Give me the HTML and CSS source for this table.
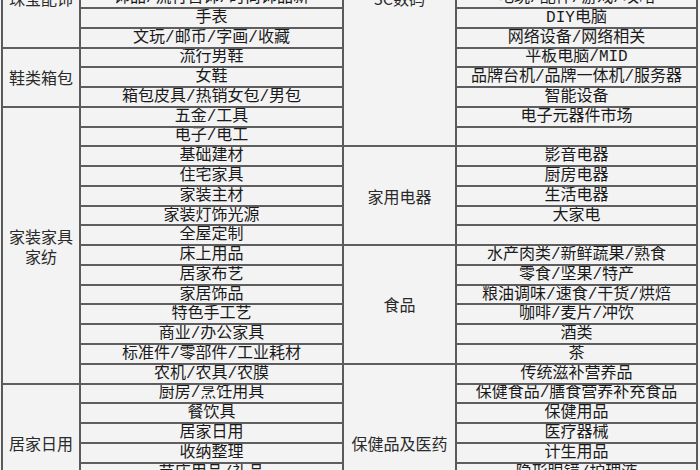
FILE: index.html
```html
<!DOCTYPE html>
<html lang="zh-CN">
<head>
<meta charset="utf-8">
<link rel="stylesheet" href="styles.css">
</head>
<body>
<div class="frame">
  <div class="grid">
    <div class="c cat top s3">珠宝配饰</div>
    <div class="c">饰品/流行首饰/时尚饰品新</div>
    <div class="c cat top s8">3C数码</div>
    <div class="c">电玩/配件/游戏/攻略</div>

    <div class="c">手表</div>
    <div class="c">DIY电脑</div>

    <div class="c">文玩/邮币/字画/收藏</div>
    <div class="c">网络设备/网络相关</div>

    <div class="c cat s3">鞋类箱包</div>
    <div class="c">流行男鞋</div>
    <div class="c">平板电脑/MID</div>

    <div class="c">女鞋</div>
    <div class="c">品牌台机/品牌一体机/服务器</div>

    <div class="c">箱包皮具/热销女包/男包</div>
    <div class="c">智能设备</div>

    <div class="c cat s14"><span class="two"><span class="ln">家装家具</span><span class="ln">家纺</span></span></div>
    <div class="c">五金/工具</div>
    <div class="c">电子元器件市场</div>

    <div class="c">电子/电工</div>
    <div class="c"></div>

    <div class="c">基础建材</div>
    <div class="c cat s5">家用电器</div>
    <div class="c">影音电器</div>

    <div class="c">住宅家具</div>
    <div class="c">厨房电器</div>

    <div class="c">家装主材</div>
    <div class="c">生活电器</div>

    <div class="c">家装灯饰光源</div>
    <div class="c">大家电</div>

    <div class="c">全屋定制</div>
    <div class="c"></div>

    <div class="c">床上用品</div>
    <div class="c cat s6">食品</div>
    <div class="c">水产肉类/新鲜蔬果/熟食</div>

    <div class="c">居家布艺</div>
    <div class="c">零食/坚果/特产</div>

    <div class="c">家居饰品</div>
    <div class="c">粮油调味/速食/干货/烘焙</div>

    <div class="c">特色手工艺</div>
    <div class="c">咖啡/麦片/冲饮</div>

    <div class="c">商业/办公家具</div>
    <div class="c">酒类</div>

    <div class="c">标准件/零部件/工业耗材</div>
    <div class="c">茶</div>

    <div class="c">农机/农具/农膜</div>
    <div class="c cat s8">保健品及医药</div>
    <div class="c">传统滋补营养品</div>

    <div class="c cat s6">居家日用</div>
    <div class="c">厨房/烹饪用具</div>
    <div class="c">保健食品/膳食营养补充食品</div>

    <div class="c">餐饮具</div>
    <div class="c">保健用品</div>

    <div class="c">居家日用</div>
    <div class="c">医疗器械</div>

    <div class="c">收纳整理</div>
    <div class="c">计生用品</div>

    <div class="c">节庆用品/礼品</div>
    <div class="c">隐形眼镜/护理液</div>

    <div class="c">鲜花速递/绿植园艺</div>
    <div class="c">OTC药品/医疗器械</div>
  </div>
</div>
</body>
</html>
```
FILE: styles.css
```css
html, body {
  margin: 0;
  padding: 0;
  background: #f3f3f3;
}

.frame {
  width: 700px;
  height: 470px;
  overflow: hidden;
  background: #f3f3f3;
}

.grid {
  display: grid;
  grid-template-columns: 78px 263px 113px 241px;
  grid-auto-rows: 19.78px;
  margin-top: -10.78px;
  margin-left: 1px;
  width: 695px;
  border-left: 2px solid #5a5a5a;
  font-family: "Liberation Mono", "Noto Sans CJK SC", monospace;
  font-size: 16px;
  color: #1a1a1a;
}

.c {
  display: flex;
  align-items: center;
  justify-content: center;
  border-right: 2px solid #5a5a5a;
  border-bottom: 2px solid #5e5e5e;
  line-height: 17px;
  padding-top: 1px;
  white-space: nowrap;
  overflow: hidden;
}

.cat {
  font-family: "Noto Sans CJK SC", sans-serif;
  color: #2a2a2a;
}

.top {
  align-items: flex-start;
}

.two {
  display: flex;
  flex-direction: column;
  align-items: center;
  gap: 2px;
}

.ln {
  display: block;
  line-height: 18px;
}

.s3 { grid-row: span 3; }
.s5 { grid-row: span 5; }
.s6 { grid-row: span 6; }
.s8 { grid-row: span 8; }
.s14 { grid-row: span 14; }
```
